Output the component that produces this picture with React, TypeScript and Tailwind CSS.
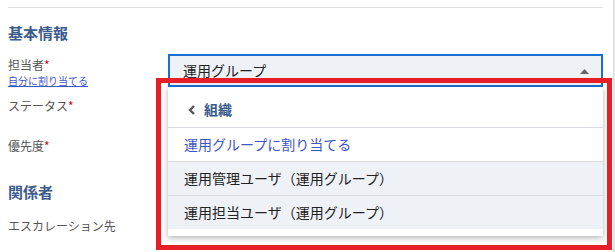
import React from "react";

const Req = () => <span className="text-[#d0021b]">*</span>;

export default function App() {
  return (
    <div
      className="relative w-[615px] h-[252px] overflow-hidden bg-white"
      style={{ fontFamily: '"Noto Sans CJK JP", "Noto Sans", sans-serif' }}
    >
      <div className="absolute right-0 top-0 h-full w-[2px] bg-[#e3e3e3]" />
      <div className="pl-2 pr-[12px]">
        <div className="mt-[7px] h-px w-[595px] bg-[#dddddd]" />
        <div className="mt-[15px] h-[20px] text-[15px] leading-[20px] font-bold text-[#3b5b8c]">基本情報</div>
        <div className="mt-[11px] flex items-start">
          <div className="w-[160px] pt-[3px]">
            <div className="h-[16px] text-[12px] leading-[16px] text-[#555]">
              担当者<Req />
            </div>
            <div className="mt-[1px] h-[14px] text-[10px] leading-[14px] text-[#3d55c8] underline">自分に割り当てる</div>
            <div className="mt-[10px] h-[16px] text-[12px] leading-[16px] text-[#555]">
              ステータス<Req />
            </div>
            <div className="mt-[24px] h-[16px] text-[12px] leading-[16px] text-[#555]">
              優先度<Req />
            </div>
            <div className="mt-[28px] h-[20px] text-[15px] leading-[20px] font-bold text-[#3b5b8c]">関係者</div>
            <div className="mt-[16px] h-[16px] text-[12px] leading-[16px] text-[#555]">エスカレーション先</div>
          </div>
          <div className="relative">
            <div className="flex h-[33px] w-[435px] items-center justify-between border-2 border-[#1b6fd2] bg-[#eef1f6] pl-[13px] pr-[12px] text-[14px] text-[#222]">
              <span>運用グループ</span>
              <svg width="9" height="5" viewBox="0 0 9 5" className="mt-[1px]">
                <polygon points="0,5 9,5 4.5,0" fill="#666" />
              </svg>
            </div>
            <div className="absolute left-0 top-full z-10 w-[435px] bg-white pb-[7px] shadow-[0_2px_6px_rgba(0,0,0,0.3)]">
              <div className="flex h-[41px] items-center gap-[8px] border-b border-[#d9dbe0] pl-[19px] pt-[5px]">
                <svg width="9" height="12" viewBox="0 0 9 12">
                  <polyline points="7,2 3,6 7,10" fill="none" stroke="#555" strokeWidth="2.4" />
                </svg>
                <span className="text-[14px] font-bold text-[#3b5b8c]">組織</span>
              </div>
              <div className="flex h-[34px] items-center border-b border-[#d9dbe0] pl-[16px] text-[14px] text-[#3d55c8]">
                運用グループに割り当てる
              </div>
              <div className="flex h-[34px] items-center border-b border-[#d9dbe0] bg-[#eef1f6] pl-[16px] text-[14px] text-[#222]">
                運用管理ユーザ（運用グループ）
              </div>
              <div className="flex h-[33px] items-center bg-[#eef1f6] pl-[16px] text-[14px] text-[#222]">
                運用担当ユーザ（運用グループ）
              </div>
            </div>
          </div>
        </div>
      </div>
      <div className="pointer-events-none absolute left-[156px] top-[78px] z-20 h-[172px] w-[456px] border-[5px] border-[#e61e27]" />
    </div>
  );
}
